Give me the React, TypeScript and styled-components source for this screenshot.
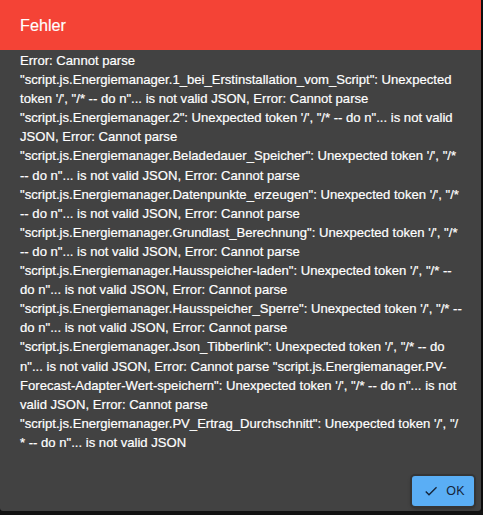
import React from 'react';
import styled, { createGlobalStyle } from 'styled-components';

const GlobalStyle = createGlobalStyle`
  html, body {
    margin: 0;
    padding: 0;
    background: #121212;
  }
  body {
    font-family: 'Liberation Sans', Arial, sans-serif;
  }
`;

const Dialog = styled.div`
  width: 481px;
  height: 511px;
  background: #424242;
  border-radius: 0 0 3px 3px;
  display: flex;
  flex-direction: column;
  overflow: hidden;
  box-shadow: 0 9px 36px rgba(0, 0, 0, 0.6);
`;

const Header = styled.div`
  height: 50px;
  flex: none;
  background: #f44336;
  color: #fff;
  font-size: 16.2px;
  display: flex;
  align-items: center;
  padding: 0 20px;
  box-sizing: border-box;
  -webkit-text-stroke: 0.15px #fff;
`;

const Content = styled.div`
  flex: 1;
  padding: 1px 19px 0 20px;
  color: #fff;
  font-size: 13.1px;
  line-height: 19.1px;
  -webkit-text-stroke: 0.2px #fff;
`;

const Actions = styled.div`
  flex: none;
  display: flex;
  justify-content: flex-end;
  padding: 0 7px 5px 0;
`;

const OkButton = styled.button`
  height: 30px;
  width: 62px;
  display: flex;
  align-items: center;
  justify-content: center;
  gap: 7px;
  border: none;
  border-radius: 3px;
  background: #5aaef5;
  color: #15253a;
  font-family: 'Liberation Sans', Arial, sans-serif;
  font-size: 12.5px;
  letter-spacing: 0.3px;
  text-transform: uppercase;
  box-shadow: 0 0 0 2px #353535, 0 2px 4px rgba(0, 0, 0, 0.4);
  cursor: pointer;
  padding: 0 0 0 2px;
`;

const CheckIcon = () => (
  <svg width="16" height="16" viewBox="0 0 24 24" fill="#15253a">
    <path d="M9 16.17L4.83 12l-1.42 1.41L9 19 21 7l-1.41-1.41z" />
  </svg>
);

const scripts = [
  '1_bei_Erstinstallation_vom_Script',
  '2',
  'Beladedauer_Speicher',
  'Datenpunkte_erzeugen',
  'Grundlast_Berechnung',
  'Hausspeicher-laden',
  'Hausspeicher_Sperre',
  'Json_Tibberlink',
  'PV-Forecast-Adapter-Wert-speichern',
  'PV_Ertrag_Durchschnitt',
];

function App(): JSX.Element {
  return (
    <>
      <GlobalStyle />
      <Dialog>
        <Header>Fehler</Header>
        <Content>
          {scripts.map((name, i) => (
            <React.Fragment key={name}>
              {i > 0 && ', '}
              Error: Cannot parse "script.js.Energiemanager.{name}": Unexpected
              token '/', "/
              {i === scripts.length - 1 && <wbr />}* -- do n"... is not valid
              JSON
            </React.Fragment>
          ))}
        </Content>
        <Actions>
          <OkButton>
            <CheckIcon />
            OK
          </OkButton>
        </Actions>
      </Dialog>
    </>
  );
}

export default App;
